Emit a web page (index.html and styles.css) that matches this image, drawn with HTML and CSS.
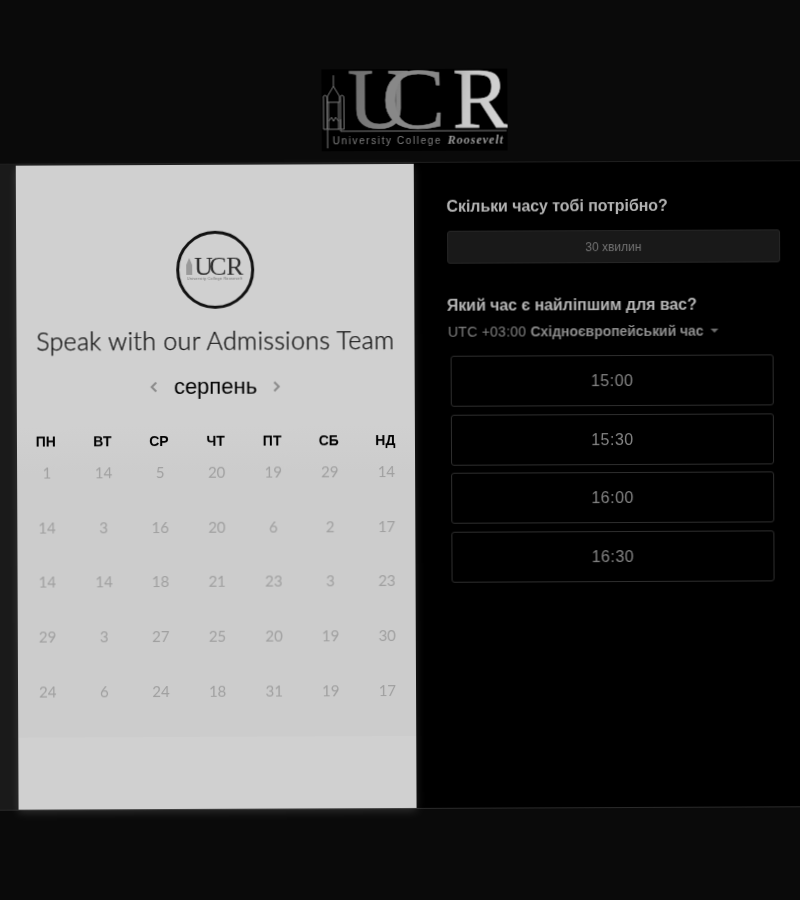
FILE: index.html
```html
<!DOCTYPE html>
<html lang="uk">
<head>
<meta charset="utf-8">
<title>UCR</title>
<link rel="stylesheet" href="styles.css">
</head>
<body>
<div class="frame">
  <header class="top">
    <svg class="logo" width="186" height="82" viewBox="0 0 186 82">
      <defs>
        <linearGradient id="ucrfill" gradientUnits="userSpaceOnUse" x1="26" x2="184" y1="20" y2="50">
          <stop offset="0" stop-color="#6e6e6e"/>
          <stop offset="0.45" stop-color="#8c8c8c"/>
          <stop offset="0.75" stop-color="#c8c8c8"/>
          <stop offset="1" stop-color="#d4d4d4"/>
        </linearGradient>
      </defs>
      <rect width="186" height="82" fill="#000"/>
      <text class="logo-ucr" x="26" y="59" fill="url(#ucrfill)" stroke="url(#ucrfill)" stroke-width="0.6">U</text>
      <text class="logo-ucr logo-c" transform="translate(60 59) scale(1.12 1)" fill="#888" stroke="#888" stroke-width="0.5">C</text>
      <text class="logo-ucr" x="131" y="59" fill="url(#ucrfill)" stroke="url(#ucrfill)" stroke-width="0.6">R</text>
      <g fill="none" stroke="#7a7a7a" stroke-width="1">
        <path d="M12 6 L12 17 M12 17 L6 27 L6 33 M12 17 L18 27 L18 33 M6 33 H18"/>
        <path d="M7 33 V52 L10 48 L12 52 L14 48 L17 52 V33"/>
        <path d="M2 30 Q1 26 3.5 26 Q6 26 5.5 30 V60 H2 Z M19 30 Q18 26 20.500 26 Q23 26 22.500 30 V60 H19 Z"/>
        <path d="M7 52 V60 M17 52 V60 M6 60 H18"/>
        <path d="M6 60 V79"/>
        <path d="M19 50 V62 H185"/>
      </g>
      <text class="logo-sub" x="11" y="75">University College</text>
      <text class="logo-ros" x="126" y="75">Roosevelt</text>
    </svg>
  </header>
  <main class="main">
    <section class="panel">
      <svg class="badge" width="80" height="80" viewBox="0 0 80 80">
        <circle cx="40" cy="40" r="37.500" fill="none" stroke="#111" stroke-width="3"/>
        <path d="M11 45 V35 L14 28 L17 35 V45 Z" fill="#999"/>
        <text class="badge-ucr" y="45"><tspan x="19">U</tspan><tspan x="34">C</tspan><tspan x="51">R</tspan></text>
        <text class="badge-sub" x="12" y="50" textLength="55">University College Roosevelt</text>
      </svg>
      <h1 class="title">Speak with our Admissions Team</h1>
      <div class="month">
        <svg class="chev" width="8" height="12" viewBox="0 0 8 12"><path d="M6.500 1.500 L2 6 L6.500 10.500" fill="none" stroke="#8a8a8a" stroke-width="2"/></svg>
        <span class="month-name">серпень</span>
        <svg class="chev" width="8" height="12" viewBox="0 0 8 12"><path d="M1.500 1.500 L6 6 L1.500 10.500" fill="none" stroke="#8a8a8a" stroke-width="2"/></svg>
      </div>
      <div class="cal">
        <div class="dow">ПН</div><div class="dow">ВТ</div><div class="dow">СР</div><div class="dow">ЧТ</div><div class="dow">ПТ</div><div class="dow">СБ</div><div class="dow">НД</div>
        <div class="day">1</div><div class="day">14</div><div class="day">5</div><div class="day">20</div><div class="day">19</div><div class="day">29</div><div class="day">14</div>
        <div class="day">14</div><div class="day">3</div><div class="day">16</div><div class="day">20</div><div class="day">6</div><div class="day">2</div><div class="day">17</div>
        <div class="day">14</div><div class="day">14</div><div class="day">18</div><div class="day">21</div><div class="day">23</div><div class="day">3</div><div class="day">23</div>
        <div class="day">29</div><div class="day">3</div><div class="day">27</div><div class="day">25</div><div class="day">20</div><div class="day">19</div><div class="day">30</div>
        <div class="day">24</div><div class="day">6</div><div class="day">24</div><div class="day">18</div><div class="day">31</div><div class="day">19</div><div class="day">17</div>
      </div>
    </section>
    <section class="side">
      <h2 class="q">Скільки часу тобі потрібно?</h2>
      <button class="dur" type="button">30 хвилин</button>
      <h2 class="q q2">Який час є найліпшим для вас?</h2>
      <div class="tz">UTC +03:00 <b>Східноєвропейський час</b><span class="caret"></span></div>
      <div class="slots">
        <div class="slot">15:00</div>
        <div class="slot">15:30</div>
        <div class="slot">16:00</div>
        <div class="slot">16:30</div>
      </div>
    </section>
  </main>
</div>
</body>
</html>
```
FILE: styles.css
```css
html, body {
  margin: 0;
  height: 900px;
  overflow: hidden;
  background: #0a0a0a;
  font-family: "Liberation Sans", Arial, sans-serif;
}
.frame {
  width: 800px;
  height: 900px;
  transform: rotate(-0.25deg);
  transform-origin: 400px 450px;
  filter: blur(0.35px);
}
.top {
  height: 163px;
  display: flex;
  justify-content: center;
  box-sizing: border-box;
  padding: 69px 0 0 31px;
}
.logo { display: block; }
.logo-ucr {
  font-family: "Liberation Serif", serif;
  font-size: 86px;
}
.logo-sub {
  font-family: "Liberation Sans", sans-serif;
  font-size: 10px;
  letter-spacing: 1.6px;
  fill: #808080;
}
.logo-ros {
  font-family: "Liberation Serif", serif;
  font-size: 12px;
  font-style: italic;
  font-weight: bold;
  letter-spacing: 1px;
  fill: #9a9a9a;
}
.badge-ucr {
  font-family: "Liberation Serif", serif;
  font-size: 26px;
  fill: #2e2e2e;
}
.badge-sub {
  font-family: "Liberation Sans", sans-serif;
  font-size: 3.5px;
  fill: #666;
}
.main {
  display: flex;
  height: 645px;
  margin: 0 -12px;
  padding-left: 28.5px;
  background: #1a1a1a;
  box-shadow: 0 -1px 0 #1e1e1e, 0 1px 0 #2a2a2a;
}
.panel {
  width: 398.5px;
  flex: none;
  box-sizing: border-box;
  margin-top: 1px;
  padding-top: 65px;
  background: #d0d0d0;
  display: flex;
  flex-direction: column;
  align-items: center;
  box-shadow: 0 3px 8px rgba(255, 255, 255, 0.14);
  position: relative;
}
.badge { display: block; }
.title {
  margin: 12px 0 0;
  font-family: Lato, sans-serif;
  font-size: 25px;
  line-height: 36px;
  font-weight: 300;
  letter-spacing: 0.3px;
  color: #0e0e0e;
  -webkit-text-stroke: 0.25px #0e0e0e;
  white-space: nowrap;
}
.month {
  display: flex;
  align-items: center;
  gap: 16px;
  margin-top: 13px;
  height: 32px;
}
.month-name {
  font-size: 22px;
  color: #000;
}
.chev { display: block; }
.cal {
  align-self: stretch;
  margin-top: 23px;
  padding: 0 0 7px 1px;
  background: linear-gradient(#d0d0d0, #cccccc 15%);
  display: grid;
  grid-template-columns: repeat(7, 56.6px);
  grid-template-rows: 31px repeat(5, 54.7px);
}
.dow {
  font-size: 14px;
  font-weight: bold;
  color: #000;
  text-align: center;
  line-height: 30px;
}
.day {
  font-family: Lato, sans-serif;
  font-size: 15px;
  color: #a0a0a0;
  text-align: center;
  line-height: 30px;
  padding-left: 2px;
}
.side {
  flex: 1;
  box-sizing: border-box;
  background: #000;
  padding: 35px 31px 0 32.5px;
}
.q {
  margin: 0;
  font-size: 16px;
  line-height: 18px;
  font-weight: bold;
  letter-spacing: -0.07px;
  color: #b4b4b4;
}
.q2 { margin-top: 33px; }
.dur {
  display: block;
  width: 100%;
  height: 33px;
  margin-top: 15px;
  padding: 0;
  background: #191919;
  border: 1px solid #262626;
  border-radius: 3px;
  font-family: inherit;
  font-size: 12px;
  color: #737373;
}
.tz {
  margin: 8px 0 0 1px;
  font-size: 14px;
  line-height: 18px;
  letter-spacing: 0.25px;
  color: #808080;
  white-space: nowrap;
}
.tz b {
  color: #8c8c8c;
  letter-spacing: -0.05px;
}
.caret {
  display: inline-block;
  margin-left: 7px;
  vertical-align: 3px;
  border: 4px solid transparent;
  border-top-color: #6e6e6e;
  border-bottom: 0;
}
.slots {
  margin: 15px 7px 0 3.5px;
  display: flex;
  flex-direction: column;
  gap: 7.700px;
}
.slot {
  height: 51px;
  box-sizing: border-box;
  border: 1px solid #2e2e2e;
  border-radius: 3px;
  text-align: center;
  line-height: 49px;
  font-size: 16px;
  letter-spacing: 0.5px;
  color: #858585;
}
```
